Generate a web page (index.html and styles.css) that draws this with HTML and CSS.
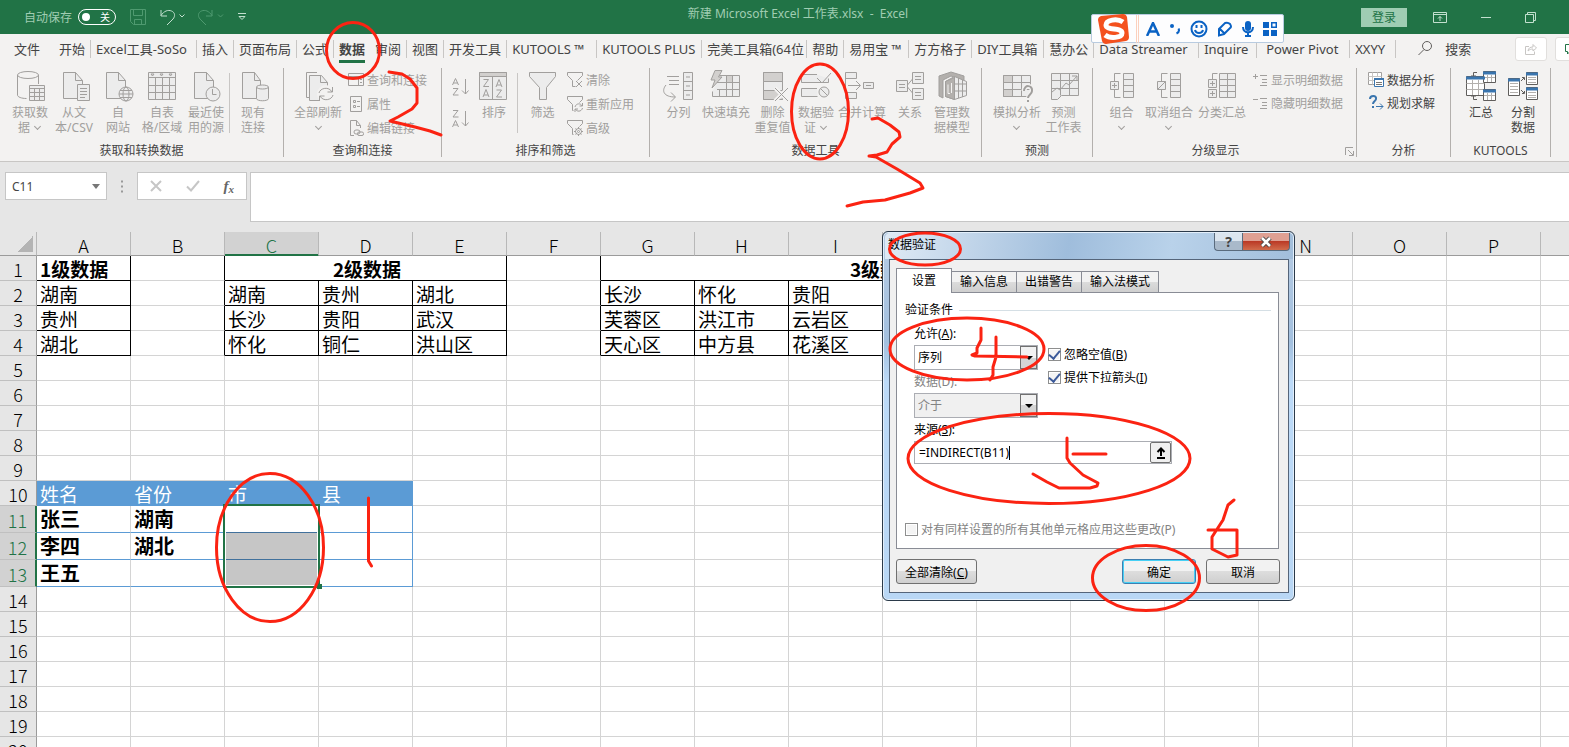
FILE: index.html
```
<!DOCTYPE html>
<html lang="zh-CN">
<head>
  <meta charset="UTF-8">
  <title>新建 Microsoft Excel 工作表.xlsx - Excel</title>
  <meta name="viewport" content="width=device-width, initial-scale=1.0">
  <link rel="stylesheet" href="styles.css">
</head>
<body>
  <header class="titlebar">
    <div class="quick">
      <label for="autosave">自动保存</label>
      <button class="toggle" id="autosave"><span class="knob"></span>关</button>
      <button class="plain dim" aria-label="保存"><svg width="16" height="16" viewBox="0 0 16 16"><path d="M.5.5h15v15H3.5l-3-3zM3.5.5v6h9v-6M4.500 15.500v-5h7v5"/></svg></button>
      <button class="plain" aria-label="撤消"><svg width="24" height="17" viewBox="0 0 24 17"><path d="M1 1v6h6M1 6.500C4 2 8 .5 11.500 2s4 5 1.500 8l-6 6M19.500 5.500l2.500 2.500 2.500-2.500"/></svg></button>
      <button class="plain dim" aria-label="恢复"><svg width="26" height="17" viewBox="0 0 26 17"><path d="M14 1v6H8M14 6.500C11 2 7 .5 3.500 2s-4 5-1.500 8l6 6M20 5.500l2.500 2.500 2.500-2.500"/></svg></button>
      <button class="plain" aria-label="自定义"><svg width="8" height="8" viewBox="0 0 8 8"><path d="M0 .5h8M1 3.500l3 3 3-3z"/></svg></button>
    </div>
    <div class="doc-title">新建 Microsoft Excel 工作表.xlsx &nbsp;-&nbsp; Excel</div>
    <div class="window-btns">
      <button class="login">登录</button>
      <button class="plain" aria-label="功能区显示选项"><svg width="14" height="11" viewBox="0 0 14 11"><path d="M.5.5h13v10H.5zM.5 2.500h13M7 9V4.500M5 6.500l2-2 2 2"/></svg></button>
      <button class="plain" aria-label="最小化"><svg width="10" height="11" viewBox="0 0 10 11"><path d="M0 5.500h10"/></svg></button>
      <button class="plain" aria-label="还原"><svg width="11" height="11" viewBox="0 0 11 11"><path d="M.5 2.500h8v8h-8zM2.500 2.500v-2h8v8h-2"/></svg></button>
    </div>
  </header>

  <nav class="tabs">
    <button class="tab file">文件</button>
    <button class="tab">开始</button>
    <button class="tab w-soso">Excel工具-SoSo</button>
    <button class="tab">插入</button>
    <button class="tab">页面布局</button>
    <button class="tab">公式</button>
    <button class="tab active">数据</button>
    <button class="tab">审阅</button>
    <button class="tab">视图</button>
    <button class="tab">开发工具</button>
    <button class="tab w-kt">KUTOOLS ™</button>
    <button class="tab w-ktp">KUTOOLS PLUS</button>
    <button class="tab w-ktp">完美工具箱(64位</button>
    <button class="tab">帮助</button>
    <button class="tab w-yyb">易用宝 ™</button>
    <button class="tab">方方格子</button>
    <button class="tab w-diy">DIY工具箱</button>
    <button class="tab">慧办公</button>
    <button class="tab w-ktp">Data Streamer</button>
    <button class="tab w-inq">Inquire</button>
    <button class="tab w-pp">Power Pivot</button>
    <button class="tab w-xy">XXYY</button>
    <button class="search"><svg width="14" height="15" viewBox="0 0 14 15"><circle cx="9" cy="5" r="4.500"/><path d="M6 8.500L.5 14"/></svg>搜索</button>
    <button class="share" aria-label="共享"><svg width="12" height="12" viewBox="0 0 12 12"><path d="M4 3.500H.5v8h9v-3M3 8c.5-3 2-4 5-4V1.500L11.500 5 8 8V6C6 6 4.500 6.500 3 8z"/></svg></button>
    <button class="share green" aria-label="批注"><svg width="12" height="12" viewBox="0 0 12 12"><path d="M.5 1.500h11v7H5l-2.500 2.500V8.500h-2z"/></svg></button>
  </nav>

  <section class="ribbon">
    <div class="group g-get">
      <div class="tools">
        <button class="big"><svg class="ico" viewBox="-3 0 32 32"><ellipse cx="11" cy="5" rx="10.500" ry="3.500"/><path d="M.5 5v20c0 2 4 3.500 9 3.500M21.500 5v9"/><path class="f" d="M12.500 15.500h15v15h-15z"/><path d="M12.500 18.500h15M12.500 22.500h15M12.500 26.500h15M17.500 18.500v12M22.500 18.500v12"/></svg>获取数<br>据 <i class="chev"></i></button>
        <button class="big"><svg class="ico" viewBox="-3 0 32 32"><path class="f" d="M2.500 2.500h12l7 8v18h-19z"/><path d="M14.500 2.500v8h7"/><path class="f" d="M16.500 14.500h12v16h-12z"/><path d="M19 18.500h7M19 21.500h7M19 24.500h7M19 27.500h5"/></svg>从文<br>本/CSV</button>
        <button class="big"><svg class="ico" viewBox="-2 0 32 32"><path class="f" d="M2.500 2.500h12l7 8v18h-19z"/><path d="M14.500 2.500v8h7"/><circle class="f" cx="22" cy="24" r="7"/><ellipse cx="22" cy="24" rx="3" ry="7"/><path d="M15 24h14M16 20.500h12M16 27.500h12"/></svg>自<br>网站</button>
        <button class="big"><svg class="ico" viewBox="0 0 32 32"><path class="f" d="M2.500 2.500h27v27h-27z"/><path d="M2.500 7.500h27M2.500 15.500h27M2.500 22.500h27M9.500 7.500v22M16.500 7.500v22M23.500 7.500v22M5 4h3l-1.500 2zM14 4h3l-1.500 2zM23 4h3l-1.500 2z"/></svg>自表<br>格/区域</button>
        <button class="big"><svg class="ico" viewBox="1 0 32 32"><path class="f" d="M5.500 2.500h12l7 8v18h-19z"/><path d="M17.500 2.500v8h7"/><circle class="f" cx="24" cy="24" r="7"/><path d="M23.500 19v5.500h4"/></svg>最近使<br>用的源</button>
        <span class="divider"></span>
        <button class="big"><svg class="ico" viewBox="0 0 32 32"><path class="f" d="M5.500 2.500h12l6 8v18h-18z"/><path d="M17.500 2.500v8h6"/><path class="f" d="M19.500 17v11.500c0 3 12 3 12 0V17"/><ellipse class="f" cx="25.500" cy="17" rx="6" ry="2"/></svg>现有<br>连接</button>
      </div>
      <div class="caption">获取和转换数据</div>
    </div>

    <div class="group g-query">
      <div class="tools">
        <button class="big w52"><svg class="ico" viewBox="-1 0 32 32"><path d="M14 2.500H3.500v25h3"/><path class="f" d="M6.500 5.500h12l6 7v18h-18z"/><path d="M17.500 5.500v7h7"/><circle cx="23" cy="24" r="9" fill="#f3f2f1" stroke="none"/><path d="M16 23c1-5 10-7 13-1M29.500 17v5h-5M30 25c-1 5-10 7-13 1M16.500 31v-5h5"/></svg>全部刷新<br><i class="chev"></i></button>
        <div class="small-col">
          <button class="small"><svg class="sico" viewBox="0 0 16 16"><path d="M.5 1.500h15v12H.5zM.5 4.500h15M10.500 4.500v9M12 7.500h2M12 10.500h2"/></svg>查询和连接</button>
          <button class="small"><svg class="sico" viewBox="0 0 16 16"><path d="M2.500.5h11v15h-11zM5.500 4.500h2v2h-2zM5.500 9.500h2v2h-2zM9 5.500h3M9 10.500h3"/></svg>属性</button>
          <button class="small"><svg class="sico" viewBox="0 0 16 16"><path d="M6 15.500H2.500V.5h6l4 5V8M8.500.5v5h4"/><rect x="6" y="10" width="6" height="4" rx="2"/><rect x="9.500" y="12" width="6" height="3.500" rx="1.500"/></svg>编辑链接</button>
        </div>
      </div>
      <div class="caption">查询和连接</div>
    </div>

    <div class="group g-sort">
      <div class="tools">
        <div class="sort-col">
          <button class="small" aria-label="升序"><svg width="17" height="18" viewBox="0 0 17 18"><path d="M.5 7l3-6.500 3 6.500M1.500 5h4M1 10.500h5L1 17h5.500M13.500 1v15M10 12.500l3.500 3.500 3-3.500"/></svg></button>
          <button class="small" aria-label="降序"><svg width="17" height="18" viewBox="0 0 17 18"><path d="M1 .5h5L1 7h5.500M.5 17l3-6.500 3 6.500M1.500 15h4M13.500 1v15M10 12.500l3.500 3.500 3-3.500"/></svg></button>
        </div>
        <button class="big"><svg class="ico" viewBox="1 0 32 32"><path class="f" d="M2.500 2.500h27v27h-27z"/><path fill="#d2d0ce" d="M2.500 2.500h27v4h-27z"/><path d="M15.500 6.500v23M6.500 9.500h5l-5 7h5.500M6 27l3-7.500 3 7.500M7 25h4M19 17l3-7.500 3 7.500M20 15h4M19.500 20h5l-5 7h5.500"/></svg>排序</button>
        <span class="divider"></span>
        <button class="big w47"><svg class="ico" viewBox="0 0 32 32"><path class="f" d="M2.500 2.500h26v4l-9 11v12h-7v-12l-10-11z"/></svg>筛选</button>
        <div class="small-col">
          <button class="small"><svg class="sico" viewBox="0 0 16 16"><path d="M.5.5h15v3l-5 5M.5.5v3l5 5v6h3M9 9l6 6M15 9l-6 6"/></svg>清除</button>
          <button class="small"><svg class="sico" viewBox="0 0 16 16"><path d="M.5.5h15v3l-3 3M.5.5v3l5 5v6h1M8 11c1-4 6-4 7-1M15.500 7v3h-3M15.500 12c-1 4-6 4-7 1M8 16v-3h3"/></svg>重新应用</button>
          <button class="small"><svg class="sico" viewBox="0 0 16 16"><path d="M.5.5h15v3l-3 3M.5.5v3l5 5v6h1"/><circle cx="11.500" cy="11.500" r="3"/><circle cx="11.500" cy="11.500" r="1"/><path d="M11.500 7v2M11.500 14v2M7 11.500h2M14 11.500h2M8.500 8.500l1.500 1.500M13 13l1.500 1.500M14.500 8.500L13 10M10 13l-1.500 1.500"/></svg>高级</button>
        </div>
      </div>
      <div class="caption">排序和筛选</div>
    </div>

    <div class="group g-tools">
      <div class="tools">
        <button class="big w47"><svg class="ico" viewBox="1 0 32 32"><path class="f" d="M21.500 2.500h9v27h-9z"/><path d="M21.500 11.500h9M21.500 20.500h9M24 7h4M24 16h4M24 25h4M5 6.500h12M7 10.500h10M7 14.500h10M4 15c-5 6-2 12 9 12M9 22.500l4.500 4.500-4.500 4.500"/></svg>分列</button>
        <button class="big w47"><svg class="ico" viewBox="1 0 32 32"><path class="f" d="M10.500 5.500h20v21h-27v-5"/><path fill="#d2d0ce" d="M17.500 5.500h6v7h-6z"/><path d="M8 12.500h22M8 19.500h22M10.500 19v7M17.500 5.500v21M23.500 5.500v21"/><path fill="#d2d0ce" d="M6 .5h7L9.500 7H13L3 18l3-8H2z"/></svg>快速填充</button>
        <button class="big w47"><svg class="ico" viewBox="-1 0 32 32"><path class="f" d="M5.500 2.500h19v27h-19z"/><path fill="#d2d0ce" d="M5.500 2.500h19v9h-19zM5.500 20.500h19v9h-19z"/><path stroke="#f3f2f1" stroke-width="4" d="M17 18l13 13M30 18L17 31"/><path d="M17 18l13 13M30 18L17 31"/></svg>删除<br>重复值</button>
        <button class="big w40"><svg class="ico" viewBox="0 0 32 32"><path class="f" d="M17 4.500H1.500v8h27v-4M17 18.500H1.500v8h16"/><path d="M17 8l5 5 9-10"/><circle class="f" cx="24" cy="22" r="5"/><path d="M20.500 18.500l7 7"/></svg>数据验<br>证 <i class="chev"></i></button>
        <button class="big w52"><svg class="ico" viewBox="3 0 32 32"><path class="f" d="M2.500 2.500h11v6h-11zM2.500 22.500h11v6h-11zM20.500 12.500h10v6h-10z"/><path d="M2.500 8v14M5 15.500h12M13 11l4.500 4.500L13 20M23 15.500h5"/></svg>合并计算</button>
        <button class="big"><svg class="ico" viewBox="0 0 32 32"><path class="f" d="M2.500 10.500h11v11h-11zM18.500 2.500h11v11h-11zM18.500 18.500h11v11h-11z"/><path d="M5 14.500h6M5 17.500h6M21 6.500h6M21 9.500h6M21 22.500h6M21 25.500h6M13.500 15l5-6M13.500 17l5 6"/></svg>关系</button>
        <button class="big w40"><svg class="ico" viewBox="0 0 32 32"><path fill="#b3b0ad" d="M3 6l12-4 13 4v5l-13-5-8 4v18l-4-2z"/><path class="f" d="M9.500 11.500l9-5 12 5v14l-12 4-9-3z"/><path d="M18.500 6.500v23M22.500 8v20M26.500 10v17M18.500 14h12M18.500 21h12"/><path fill="#b3b0ad" d="M9.500 11.500l9-4v22l-9-3z"/><path stroke="#f3f2f1" d="M12 14.500v9h2M15.500 13v10"/></svg>管理数<br>据模型</button>
      </div>
      <div class="caption">数据工具</div>
    </div>

    <div class="group g-fore">
      <div class="tools">
        <button class="big w47"><svg class="ico" viewBox="0 0 32 32"><path class="f" d="M2.500 5.500h27v21h-27z"/><path fill="#d2d0ce" d="M2.500 5.500h9v7h-9zM2.500 19.500h9v7h-9z"/><path d="M2.500 12.500h27M2.500 19.500h27M11.500 5.500v21M20.500 5.500v21"/><path stroke="#f3f2f1" stroke-width="5" d="M23 21c0-7 9-6 8 0 0 3-4 4-4 9"/><path stroke-width="2" d="M23 21c0-7 9-6 8 0 0 3-4 4-4 7M27 30v2"/></svg>模拟分析<br><i class="chev"></i></button>
        <button class="big w47"><svg class="ico" viewBox="-1 0 32 32"><path class="f" d="M2.500 3.500h27v22h-17l-4 4h-6z"/><path d="M2.500 10.500h27M2.500 18.500h27M11.500 3.500v22M20.500 3.500v22"/><path d="M3 22l5-4 3 2 6-7 3 2 8-9M23 6h5v5"/></svg>预测<br>工作表</button>
      </div>
      <div class="caption">预测</div>
    </div>

    <div class="group g-outline">
      <div class="tools">
        <button class="big w47"><svg class="ico" viewBox="0 0 32 32"><path class="f" d="M17.500 3.500h10v24h-10zM4.500 11.500h8v8h-8z"/><path d="M17.500 9.500h10M17.500 15.500h10M17.500 21.500h10M8.500 11V3.500h6M8.500 19.500v8h6M6 15.500h5M8.500 13v5"/></svg>组合<br><i class="chev"></i></button>
        <button class="big w47"><svg class="ico" viewBox="0 0 32 32"><path class="f" d="M17.500 3.500h10v24h-10zM4.500 11.500h8v8h-8z"/><path d="M17.500 9.500h10M17.500 15.500h10M17.500 21.500h10M8.500 11V3.500h6M8.500 19.500v8h6M4.500 19.500l8-8"/></svg>取消组合<br><i class="chev"></i></button>
        <button class="big sum"><svg class="ico" viewBox="0 0 32 32"><path class="f" d="M13.500 3.500h16v24h-16zM2.500 9.500h8v8h-8zM2.500 19.500h8v8h-8z"/><path d="M13.500 9.500h16M13.500 15.500h16M13.500 21.500h16M21.500 3.500v24M6.500 9V3.500h5M4 13.500h5M6.500 11v5M4 23.500h5M6.500 21v5"/></svg>分类汇总</button>
        <div class="small-col two">
          <button class="small"><svg class="sico" viewBox="0 0 16 16"><path d="M1 4.500h5M3.500 2v5M8 3.500h7M10 7.500h5M10 10.500h5M8 13.500h7"/></svg>显示明细数据</button>
          <button class="small"><svg class="sico" viewBox="0 0 16 16"><path d="M1 4.500h5M8 3.500h7M10 7.500h5M10 10.500h5M8 13.500h7"/></svg>隐藏明细数据</button>
        </div>
      </div>
      <div class="caption with-launcher">分级显示<svg width="9" height="9" viewBox="0 0 9 9"><path d="M.5 8V.5H8M3 3l5 5M8.500 4v4.500H4"/></svg></div>
    </div>

    <div class="group g-ana on">
      <div class="tools">
        <div class="small-col two">
          <button class="small"><svg class="sico" viewBox="0 0 16 16"><path fill="#fff" stroke="#a19f9d" d="M.5.5h13v12H.5z"/><path stroke="#c8c6c4" d="M.5 4.500h13M.5 8.500h6M4.500.5v12M9.500.5v4"/><path fill="#fff" stroke="#3a75ae" d="M6.500 6.500h9v8h-9z"/><path stroke="#3a75ae" stroke-width="2" d="M6 7h10"/><path stroke="#797775" d="M8 10.500h6M8 12.500h6"/></svg>数据分析</button>
          <button class="small"><svg class="sico" viewBox="0 0 16 16"><path stroke="#3a75ae" stroke-width="2" d="M2 4c0-4 7-4 6 0 0 2-3 2-3 5M5 11v2"/><path stroke="#3a75ae" d="M8 11.500h7M12 8.500l3 3-3 3"/></svg>规划求解</button>
        </div>
      </div>
      <div class="caption">分析</div>
    </div>

    <div class="group g-kt on">
      <div class="tools">
        <button class="big"><svg class="ico" viewBox="0 0 32 32"><path class="w" d="M1.500 6.500h18v19h-18z"/><path class="thin" d="M1.500 13.500h18M1.500 19.500h18M7.500 10v15M13.500 10v15"/><path d="M12 2.500H8.500v4M6.500 5l2 2 2-2M12 29.500H8.500v-4M6.500 27l2-2 2 2"/><path class="w" d="M18.500 1.500h12v11h-12zM18.500 19.500h12v11h-12z"/><path class="thin" d="M19 7.500h11M22.500 5v7M26.500 5v7M19 25.500h11M22.500 23v7M26.500 23v7"/><path class="b" d="M1 8h19M18 3h13M18 21h13"/></svg>汇总</button>
        <button class="big w40"><svg class="ico" viewBox="0 0 32 32"><path class="w" d="M1.500 8.500h11v17h-11zM19.500 2.500h11v12h-11zM19.500 17.500h11v12h-11z"/><path class="thin" d="M3 13.500h8M3 16.500h8M3 19.500h8M3 22.500h8M21 7.500h8M21 9.500h8M21 12.500h8M21 22.500h8M21 25.500h8M21 27.500h8"/><path d="M14 11l3-3M15 7.500h2.500V10M14 20l3 3M15 23.500h2.500V21"/><path class="b" d="M1 10h12M19 4h12M19 19h12"/></svg>分割<br>数据</button>
      </div>
      <div class="caption">KUTOOLS</div>
    </div>
  </section>

  <section class="formula-row">
    <div class="name-box"><input aria-label="名称框" value="C11"><i class="tri"></i></div>
    <svg class="dots" width="3" height="13" viewBox="0 0 3 13"><path d="M0 1.500h2M0 6.500h2M0 11.500h2"/></svg>
    <div class="fx-box">
      <button aria-label="取消"><svg width="12" height="12" viewBox="0 0 12 12"><path d="M1 1l10 10M11 1L1 11"/></svg></button>
      <button aria-label="输入"><svg width="14" height="12" viewBox="0 0 14 12"><path d="M1 6.500L5 10.500 13 1"/></svg></button>
      <button class="fx">f<sub>x</sub></button>
    </div>
    <input class="formula" aria-label="编辑栏">
  </section>

  <main class="sheet">
    <table class="grid" id="grid"></table>
  </main>

  <div class="ime">
    <svg width="32" height="30" viewBox="0 0 32 30"><path fill="#f4511e" d="M4 2l22-2q3 0 4 3l2 20q0 3-3 4L9 30q-3 0-4-3L1 6q0-3 3-4z"/><path fill="none" stroke="#fff" stroke-width="5" d="M26 8C20 4 9 6 9 11c0 6 16 2 16 8 0 5-12 6-17 2"/></svg>
    <span class="ime-sep"></span>
    <svg width="14" height="14" viewBox="0 0 14 14"><path fill="none" stroke="#0a62c4" stroke-width="2.500" d="M1 14L7 1l6 13M3.500 9.500h7"/></svg>
    <svg width="12" height="12" viewBox="0 0 12 12"><circle cx="3" cy="3" r="2" fill="#0a62c4"/><path fill="none" stroke="#0a62c4" stroke-width="2" d="M9.500 5.500c1 2 0 4-2 5"/></svg>
    <svg width="18" height="18" viewBox="0 0 18 18"><g fill="none" stroke="#0a62c4" stroke-width="2"><circle cx="9" cy="9" r="7.500"/><path d="M5 10c1 4 7 4 8 0M6.500 5v3M11.500 5v3"/></g></svg>
    <svg width="16" height="16" viewBox="0 0 16 16"><path fill="none" stroke="#0a62c4" stroke-width="2" d="M2 8l6-6q3-1 5 1 2 3 0 4l-6 6-5 1.500zM3 8l5 5"/></svg>
    <svg width="12" height="16" viewBox="0 0 12 16"><rect x="3" y="0" width="6" height="10" rx="3" fill="#0a62c4"/><path fill="none" stroke="#0a62c4" stroke-width="2" d="M1 6c0 7 10 7 10 0M6 12v3M3 15h6"/></svg>
    <svg width="14" height="14" viewBox="0 0 14 14"><path fill="#0a62c4" d="M0 0h6v6H0zM0 8h6v6H0zM8 8h6v6H8z"/><path fill="none" stroke="#0a62c4" stroke-width="1.500" d="M8.750.75h4.500v4.500h-4.500z"/></svg>
  </div>

  <div class="dialog" role="dialog" aria-labelledby="dlg-title">
    <div class="dlg-head">
      <h2 id="dlg-title">数据验证</h2>
      <button class="dlg-help" aria-label="帮助">?</button>
      <button class="dlg-close" aria-label="关闭"><svg width="12" height="10" viewBox="0 0 12 10"><path stroke="#444" stroke-width="4.500" d="M2 1l8 8M10 1L2 9"/><path stroke="#fff" stroke-width="2.500" d="M2 1l8 8M10 1L2 9"/></svg></button>
    </div>
    <form class="dlg-body" onsubmit="return false">
      <div class="dlg-tabs">
        <button class="dlg-tab current">设置</button>
        <button class="dlg-tab">输入信息</button>
        <button class="dlg-tab">出错警告</button>
        <button class="dlg-tab">输入法模式</button>
      </div>
      <div class="panel">
        <div class="legend">验证条件</div>
        <div class="fields">
          <div class="left">
            <label for="allow">允许(<u>A</u>):</label>
            <div class="combo"><select id="allow"><option>序列</option></select><span class="drop"></span></div>
            <label for="op" class="off">数据(D):</label>
            <div class="combo off"><select id="op" disabled><option>介于</option></select><span class="drop"></span></div>
          </div>
          <div class="right">
            <label><input type="checkbox" checked><span>忽略空值(<u>B</u>)</span></label>
            <label><input type="checkbox" checked><span>提供下拉箭头(<u>I</u>)</span></label>
          </div>
        </div>
        <div class="source">
          <label for="src">来源(<u>S</u>):</label>
          <div class="src-box">
            <div class="src-text"><input id="src" value="=INDIRECT(B11)"><span class="caret"></span></div>
            <button aria-label="折叠"><svg width="12" height="12" viewBox="0 0 12 12"><path fill="none" stroke="#000" stroke-width="2" d="M6 9V2M2.500 5L6 1.500 9.500 5M2 11h8"/></svg></button>
          </div>
        </div>
        <label class="apply off"><input type="checkbox" disabled><span>对有同样设置的所有其他单元格应用这些更改(P)</span></label>
      </div>
      <div class="dlg-foot">
        <button class="btn clear">全部清除(<u>C</u>)</button>
        <button class="btn ok">确定</button>
        <button class="btn">取消</button>
      </div>
    </form>
  </div>

  <!-- hand drawn step marks -->
  <svg class="marks" width="1569" height="747" viewBox="0 0 1569 747">
    <ellipse cx="270" cy="547.500" rx="53.500" ry="74"/>
    <path d="M368.500 498v63l3 5"/>
    <ellipse cx="353" cy="50.500" rx="26.500" ry="28"/>
    <path d="M389 72l13 2 8 5 7 9v15l-5 6-14 8-8 4 25 6 15 4 11 4"/>
    <ellipse cx="820" cy="111.500" rx="28.500" ry="47.500"/>
    <path d="M872 119l6-1 12 7 9 7 1 5-8 7-5 8-10 3-8 1 7 1 21 12 23 14 3 5-13 5-25 7-22 2-16 4"/>
    <ellipse cx="925" cy="249" rx="35.500" ry="16"/>
    <ellipse cx="967" cy="349" rx="77" ry="31"/>
    <path d="M981 328v12l-4 8v5l-5 2 3 1 52 1M996 337v20l-3 10v8l-3 5"/>
    <ellipse cx="1049" cy="458.500" rx="141" ry="45"/>
    <path d="M1067 438v20l3 5 13 12 15 8-1 3-7 2h-31l-12-6-14-8M1073 454h33"/>
    <ellipse cx="1146" cy="578" rx="53.500" ry="32.500"/>
    <path d="M1234 500l-6 5-5 15-11 17v12l16 8 9-2v-25h-29"/>
  </svg>

  <script>
    const cols = "ABCDEFGHIJKLMNOPQ".split("");
    const data = {
      A1: "1级数据", C1: "2级数据", G1: "3级数据",
      A2: "湖南", A3: "贵州", A4: "湖北",
      C2: "湖南", D2: "贵州", E2: "湖北",
      C3: "长沙", D3: "贵阳", E3: "武汉",
      C4: "怀化", D4: "铜仁", E4: "洪山区",
      G2: "长沙", H2: "怀化", I2: "贵阳",
      G3: "芙蓉区", H3: "洪江市", I3: "云岩区",
      G4: "天心区", H4: "中方县", I4: "花溪区",
      A10: "姓名", B10: "省份", C10: "市", D10: "县",
      A11: "张三", B11: "湖南", A12: "李四", B12: "湖北", A13: "王五"
    };
    const merged = { C1: 3, G1: 6 };
    const boxed = "ACDEGHIJKL";

    let html = "<colgroup><col class='col-num'>" + cols.map(() => "<col class='col'>").join("") + "</colgroup>";
    html += "<tr class='heads'><th class='corner'></th>" +
      cols.map(c => `<th class="${c === "C" ? "sel" : ""}">${c}</th>`).join("") + "</tr>";

    for (let r = 1; r <= 20; r++) {
      const picked = r >= 11 && r <= 13;
      html += `<tr class="${picked ? "tall" : ""}"><th class="${picked ? "sel" : ""}">${r}</th>`;
      for (let i = 0; i < cols.length; i++) {
        const c = cols[i], id = c + r, span = merged[id] || 1;
        const cls = [];
        if (r <= 4 && boxed.includes(c)) cls.push("box");
        if (r <= 4 && (c === "B" || c === "F")) cls.push("box-r");
        if (r === 1 && data[id]) cls.push("bold");
        if (span > 1) cls.push("center");
        if (r === 10 && i < 4) cls.push("thead");
        if (picked && i < 4) cls.push("line");
        if (picked && c === "D") cls.push("line-r");
        const extra = id === "C11" ? '<div class="selection"><span></span><span class="shade"></span><span class="shade"></span></div>' : "";
        html += `<td colspan="${span}" class="${cls.join(" ")}">${data[id] || ""}${extra}</td>`;
        i += span - 1;
      }
      html += "</tr>";
    }
    document.getElementById("grid").innerHTML = html;
  </script>
</body>
</html>
```
FILE: styles.css
```
* { box-sizing: border-box; }
body { margin: 0; height: 100vh; display: flex; flex-direction: column; overflow: hidden; position: relative; background: #e6e6e6; font-family: "Noto Sans", "Noto Sans CJK SC", sans-serif; font-size: 12px; color: #444; }
button, input, select { font: inherit; color: inherit; margin: 0; padding: 0; border: none; background: none; border-radius: 0; outline: none; }
svg { flex: none; }

/* title bar */
.titlebar { display: flex; align-items: center; justify-content: space-between; height: 34px; background: #217346; color: #a0cdb2; flex: none; padding: 0 33px 0 24px; }
.quick, .window-btns { display: flex; align-items: center; flex: 1; }
.quick { gap: 14px; }
.quick label { margin-right: -8px; }
.doc-title { margin-left: 36px; line-height: 28px; align-self: flex-start; }
.toggle { display: flex; align-items: center; justify-content: space-between; width: 38px; height: 16px; padding: 0 5px 0 3px; border: 1px solid #fff; border-radius: 8px; color: #fff; font-size: 10px; line-height: 14px; }
.knob { width: 8px; height: 8px; border-radius: 4px; background: #fff; }
.plain { display: flex; }
.plain svg { fill: none; stroke: #c3e0cf; overflow: visible; }
.plain.dim svg { stroke: #4f9a70; }
.window-btns { justify-content: flex-end; gap: 34px; }
.login { background: #9fcdb3; color: #217346; width: 46px; height: 19px; line-height: 19px; margin-right: -8px; }

/* ribbon tabs */
.tabs { display: flex; align-items: center; height: 29px; background: #f3f2f1; flex: none; font-size: 13px; overflow: hidden; }
.tab { height: 18px; line-height: 18px; padding: 0 5px; border-right: 1px solid #c8c6c4; white-space: nowrap; text-align: left; overflow: hidden; flex: none; }
.tab.file { width: 54px; border: none; text-align: center; }
.tab.active { font-weight: bold; height: 28px; line-height: 28px; box-shadow: none; border-bottom: 3px solid #217346; border-right: none; padding: 3px 0 0; margin: 0 5px; line-height: 22px; }
.w-soso { width: 106px; }
.w-kt { width: 90px; }
.w-ktp { width: 105px; padding-right: 2px; }
.w-yyb { width: 65px; padding-right: 0; }
.w-diy { width: 72px; padding-right: 0; }
.w-inq { width: 58px; padding-right: 0; }
.w-pp { width: 93px; padding-left: 9px; }
.w-xy { width: 46px; }
.search { display: flex; align-items: center; gap: 13px; margin: 0 44px 0 22px; flex: none; }
.search svg, .share svg { fill: none; stroke: #605e5c; }
.share { width: 32px; height: 24px; border: 1px solid #e1dfdd; border-radius: 3px; background: #fff; margin-right: 8px; flex: none; display: flex; align-items: center; justify-content: center; }
.share svg { stroke: #c8c6c4; }
.share.green svg { stroke: #217346; }

/* ribbon */
.ribbon { display: flex; height: 99px; padding-top: 5px; background: #f3f2f1; border-bottom: 1px solid #c8c6c4; flex: none; color: #a19f9d; }
.group { display: flex; flex-direction: column; flex: none; height: 89px; border-right: 1px solid #b3b0ad; }
.g-get { width: 284px; }
.g-query { width: 158px; }
.g-sort { width: 208px; }
.g-tools { width: 332px; }
.g-fore { width: 111px; }
.g-outline { width: 264px; }
.g-ana { width: 94px; }
.g-kt { width: 100px; }
.tools { display: flex; flex: 1; padding-left: 8px; }
.g-tools .tools, .g-outline .tools { padding-left: 5px; }
.g-fore .tools, .g-ana .tools { padding-left: 11px; }
.big { display: block; width: 44px; line-height: 15px; text-align: center; white-space: nowrap; align-self: flex-start; flex: none; }
.big.w40 { width: 40px; }
.big.w47 { width: 47px; }
.big.w52 { width: 52px; }
.big.sum { width: 60px; }
.ico { display: block; width: 32px; height: 32px; margin: 2px auto 3px; }
.sico { width: 16px; height: 16px; }
.ribbon svg { fill: none; stroke: #a19f9d; overflow: visible; }
.ribbon .f { fill: #ececec; }
.ribbon .w { fill: #fff; }
.ribbon .b { stroke: #3a75ae; stroke-width: 3; }
.ribbon .thin { stroke: #b3b0ad; }
.ribbon .on { color: #444; }
.ribbon .on svg { stroke: #605e5c; }
.chev { display: inline-block; width: 5px; height: 5px; border: solid #a19f9d; border-width: 0 1px 1px 0; transform: rotate(45deg); margin: 0 2px 3px; }
.divider { width: 1px; height: 60px; margin: 5px 1px 0; background: #c8c6c4; flex: none; }
.small-col { display: flex; flex-direction: column; }
.g-query .small-col { margin-left: 4px; }
.g-sort .small-col { margin-left: 1px; }
.small { display: flex; align-items: center; gap: 3px; height: 24px; white-space: nowrap; }
.small-col.two .small { height: 23px; }
.sort-col { display: flex; flex-direction: column; gap: 8px; width: 22px; padding: 7px 0 0 2px; }
.caption { height: 12px; line-height: 12px; text-align: center; color: #444; }
.with-launcher { display: flex; justify-content: center; align-items: center; position: relative; padding-right: 18px; }
.with-launcher svg { position: absolute; right: 2px; top: 2px; }

/* formula bar */
.formula-row { display: flex; height: 70px; padding: 10px 0 10px 5px; flex: none; align-items: flex-start; }
.name-box { display: flex; align-items: center; width: 102px; height: 28px; background: #fff; border: 1px solid #c6c6c6; padding: 0 6px; }
.name-box input { flex: 1; min-width: 0; }
.tri { border: 4px solid transparent; border-top: 5px solid #777; border-bottom: none; }
.dots { margin: 8px 13px 8px 14px; stroke: #999; stroke-width: 2; }
.fx-box { display: flex; align-items: center; justify-content: space-around; width: 110px; height: 28px; background: #fff; border: 1px solid #c6c6c6; margin-right: 3px; }
.fx-box svg { display: block; fill: none; stroke: #c6c6c6; stroke-width: 2; }
.fx { font: italic bold 15px "Liberation Serif", serif; color: #666; }
.fx sub { font-size: 11px; vertical-align: -2px; }
.formula { flex: 1; height: 50px; background: #fff; border: 1px solid #c6c6c6; border-right: none; }

/* worksheet */
.sheet { flex: 1; overflow: hidden; background: #fff; }
.grid { table-layout: fixed; width: 1635px; border-collapse: separate; border-spacing: 0; font-family: "Noto Sans CJK SC", sans-serif; font-size: 19px; color: #000; }
.col-num { width: 37px; }
.col { width: 94px; }
.grid td, .grid th { height: 25px; padding: 2px 0 0 3px; border: solid #d4d4d4; border-width: 0 1px 1px 0; line-height: 22px; white-space: nowrap; position: relative; }
.grid th { background: #e6e6e6; font-size: 18px; font-weight: 300; padding: 2px 0 0; text-align: center; border-right-color: #9b9b9b; border-bottom-color: #c0c0c0; }
.grid .heads th { height: 24px; line-height: 20px; border-right-color: #b8b8b8; border-bottom-color: #9b9b9b; }
.grid .tall td, .grid .tall th { height: 27px; line-height: 24px; }
.grid .tall td { font-size: 20px; font-weight: bold; }
.grid .tall td { padding-top: 0; line-height: 26px; }
.grid th.sel { background: #d2d2d2; color: #217346; border-right: 2px solid #217346; }
.grid .heads th.sel { border-right: 1px solid #b8b8b8; border-bottom: 1px solid #217346; box-shadow: inset 0 -1px #217346; }
.grid .corner { background: linear-gradient(135deg, transparent 50%, #b4b4b4 50%) no-repeat 17px 4px / 16px 16px #e6e6e6; }
.grid .box { border-color: #000; }
.grid .box-r { border-right-color: #000; }
.grid .bold { font-weight: bold; }
.grid .center { text-align: center; }
.grid .thead { background: #5b9bd5; color: #fff; border-color: #5b9bd5; }
.grid .line { border-bottom-color: #5b9bd5; }
.grid .line-r { border-right-color: #5b9bd5; }
.selection { position: absolute; left: -2px; top: -2px; width: 97px; height: 84px; border: 2px solid #217346; padding: 1px; display: flex; flex-direction: column; background: #fff; z-index: 1; }
.selection span { flex: 1; }
.selection .shade { background: #c6c6c6; border-top: 1px solid #41719c; }
.selection::after { content: ""; position: absolute; right: -4px; bottom: -3px; width: 5px; height: 5px; background: #217346; }

/* input method bar */
.ime { position: absolute; left: 1091px; top: 14px; display: flex; align-items: center; gap: 9px; height: 29px; padding: 0 6px 0 5px; background: #fdfdfe; border: 1px solid #b8cbe0; border-radius: 2px; z-index: 2; }
.ime-sep { width: 3px; height: 28px; border: solid #fbd0bd; border-width: 0 1px; margin: 0 -2px; }

/* dialog */
.dialog { position: absolute; left: 882px; top: 231px; width: 413px; padding: 0 5px 7px 6px; border: 1px solid #2b3a4a; border-radius: 6px; background: linear-gradient(#b6cbe3, #a3c0df 110px, #bcdaf8 150px, #b9d7f5); box-shadow: inset 0 0 0 1px #e3effb; color: #000; z-index: 3; }
.dlg-head { display: flex; align-items: flex-start; height: 26px; background: linear-gradient(100deg, #dfeaf5, #9fbddc 45%, #b9d2ea 70%, #a2bedb); margin: 1px -4px 0; padding-left: 3px; border-radius: 5px 5px 0 0; }
.dlg-head h2 { flex: 1; margin: 0; font-size: 12px; font-weight: normal; line-height: 24px; }
.dlg-help, .dlg-close { height: 18px; border: 1px solid #5a6b7d; border-top: none; display: flex; justify-content: center; align-items: center; }
.dlg-help { width: 28px; border-radius: 0 0 0 4px; border-right: none; background: linear-gradient(#dbe5ef 50%, #a9b9ca 50%); color: #444; font-size: 14px; font-weight: bold; }
.dlg-close { width: 48px; border-radius: 0 0 4px 0; background: linear-gradient(#dfa093 45%, #bb3a26 50%, #d06c4c); margin-right: 3px; }
.dlg-close svg { fill: none; overflow: visible; }
.dlg-body { background: #f0f0f0; border: 1px solid #55657a; padding: 8px 8px 8px 6px; }
.dlg-tabs { display: flex; align-items: flex-end; height: 24px; }
.dlg-tab { height: 21px; padding: 0 8px; line-height: 20px; border: 1px solid #898c95; border-left: none; border-bottom: none; background: linear-gradient(#f2f2f2 50%, #dcdcdc 50%, #cfcfcf); }
.dlg-tab.current { width: 56px; height: 25px; margin-bottom: -1px; background: #fff; border-left: 1px solid #898c95; position: relative; }
.panel { background: #fff; border: 1px solid #898c95; padding: 7px 7px 7px 8px; margin-right: 1px; line-height: 20px; }
.legend { display: flex; align-items: center; gap: 6px; }
.legend::after { content: ""; flex: 1; height: 1px; background: #d5dfe5; }
.fields { display: flex; gap: 10px; padding: 2px 0 0 9px; }
.left { width: 124px; display: flex; flex-direction: column; }
.left label, .source label { display: block; height: 23px; line-height: 23px; }
.combo { display: flex; height: 25px; border: 1px solid #abadb3; background: #fff; }
.combo select { flex: 1; appearance: none; padding-left: 3px; opacity: 1; }
.combo.off { background: #f0f0f0; }
.off { color: #838383; }
.drop { width: 17px; border: 1px solid #707070; background: linear-gradient(#f2f2f2 50%, #d5d5d5 50%); display: flex; align-items: center; justify-content: center; }
.drop::after { content: ""; border: 4px solid transparent; border-top-color: #000; border-bottom: none; }
.right { padding-top: 21px; }
.right label, .apply { display: flex; align-items: center; gap: 3px; height: 23px; }
input[type=checkbox] { appearance: none; width: 13px; height: 13px; border: 1px solid #8e8f8f; background: #f4f4f4; box-shadow: inset 0 0 0 1px #fff; display: flex; align-items: center; justify-content: center; }
input[type=checkbox]:checked::after { content: ""; width: 5px; height: 9px; border: solid #3c5a9a; border-width: 0 2px 2px 0; transform: rotate(40deg); margin-top: -3px; }
.source { padding-left: 9px; }
.src-box { display: flex; width: 258px; height: 23px; border: 1px solid #abadb3; }
.src-text { flex: 1; display: flex; align-items: center; }
.src-text input { field-sizing: content; padding-left: 4px; }
.caret { width: 1px; height: 14px; background: #000; }
.src-box button { width: 21px; border: 1px solid #707070; border-radius: 2px; background: #f0f0f0; display: flex; align-items: center; justify-content: center; }
.apply { margin-top: 54px; }
.dlg-foot { display: flex; gap: 10px; padding-top: 10px; }
.btn { width: 74px; height: 25px; border: 1px solid #707070; border-radius: 3px; background: linear-gradient(#f2f2f2 50%, #ddd 50%, #cfcfcf); }
.btn.clear { width: 81px; margin-right: auto; }
.btn.ok { border-color: #3c7fb1; box-shadow: inset 0 0 0 1px #46d0f5; }

.marks { position: absolute; left: 0; top: 0; fill: none; stroke: #fb2312; stroke-width: 3; stroke-linecap: round; stroke-linejoin: round; pointer-events: none; z-index: 4; }
```
